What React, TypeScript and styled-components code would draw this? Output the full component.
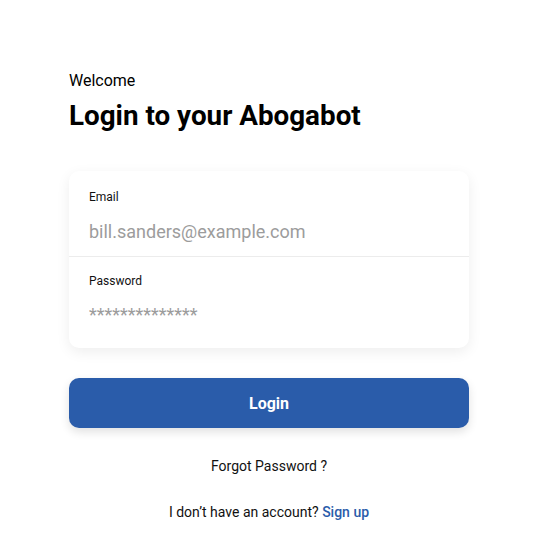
import React from "react";
import styled, { createGlobalStyle } from "styled-components";

const Global = createGlobalStyle`
  html, body { margin: 0; padding: 0; background: #ffffff; }
  body { font-family: Roboto, "Noto Sans", Arial, sans-serif; color: #000; }
  * { box-sizing: border-box; }
`;

const Page = styled.main`
  width: 536px;
  min-height: 542px;
  padding: 72px 67px 0 69px;
  display: flex;
  flex-direction: column;
`;

const Welcome = styled.p`
  margin: 0;
  font-size: 16px;
  line-height: 18px;
  font-weight: 400;
`;

const Title = styled.h1`
  margin: 9px 0 0;
  font-size: 27.8px;
  line-height: 34px;
  font-weight: 700;
`;

const Card = styled.div`
  margin-top: 38px;
  background: #fff;
  border-radius: 10px;
  box-shadow: 0 4px 14px rgba(0, 0, 0, 0.07);
  display: flex;
  flex-direction: column;
`;

const Field = styled.label<{ $divider?: boolean }>`
  display: flex;
  flex-direction: column;
  padding: ${(p) => (p.$divider ? "18px 20px 0" : "16px 20px 0")};
  height: ${(p) => (p.$divider ? "86px" : "91px")};
  border-bottom: ${(p) => (p.$divider ? "1.5px solid #ececec" : "none")};
`;

const Label = styled.span`
  font-size: 12px;
  line-height: 16px;
  color: #111;
`;

const Input = styled.input<{ $gap: number }>`
  margin-top: ${(p) => p.$gap}px;
  border: none;
  outline: none;
  padding: 0;
  font-family: Roboto, Arial, sans-serif;
  font-size: 18px;
  line-height: 22px;
  color: #999;
  background: transparent;
  &::placeholder { color: #9c9c9c; }
`;

const Button = styled.button`
  margin-top: 30px;
  height: 50px;
  width: 100%;
  border: none;
  border-radius: 10px;
  background: #2a5caa;
  color: #fff;
  font-family: Roboto, Arial, sans-serif;
  font-size: 16px;
  font-weight: 700;
  box-shadow: 0 4px 10px rgba(0, 0, 0, 0.12);
`;

const Row = styled.p<{ $gap: number }>`
  margin: ${(p) => p.$gap}px 0 0;
  text-align: center;
  font-size: 14px;
  line-height: 18px;
  color: #111;
`;

const Link = styled.a`
  color: #2a5caa;
  font-weight: 500;
  text-decoration: none;
`;

export default function App() {
  return (
    <>
      <Global />
      <Page>
        <Welcome>Welcome</Welcome>
        <Title>Login to your Abogabot</Title>
        <Card>
          <Field $divider>
            <Label>Email</Label>
            <Input $gap={16} placeholder="bill.sanders@example.com" />
          </Field>
          <Field>
            <Label>Password</Label>
            <Input $gap={15} placeholder="**************" />
          </Field>
        </Card>
        <Button>Login</Button>
        <Row $gap={29}>Forgot Password ?</Row>
        <Row $gap={28}>
          I don’t have an account? <Link>Sign up</Link>
        </Row>
      </Page>
    </>
  );
}
